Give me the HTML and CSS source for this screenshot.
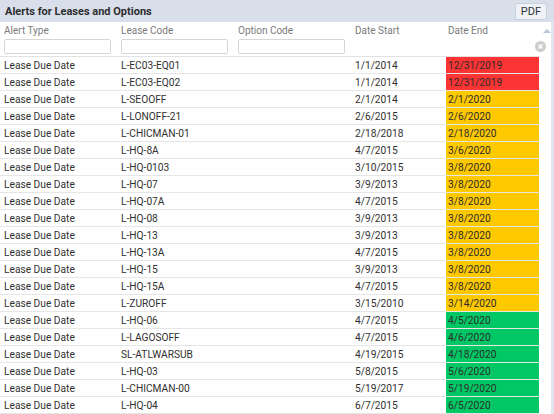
FILE: index.html
```html
<!DOCTYPE html>
<html>
	<head>
		<meta charset="utf-8">
		<title>Alerts for Leases and Options</title>
		<link rel="stylesheet" href="styles.css">
	</head>
	<body>
		<div class="titlebar">
			<span class="title">Alerts for Leases and Options</span>
			<span class="pdf">PDF</span>
		</div>
		<div class="main">
			<table class="grid">
				<colgroup>
					<col style="width:117px"><col style="width:117px"><col style="width:117px"><col style="width:95px"><col style="width:93px">
				</colgroup>
				<thead>
					<tr class="heads">
						<th>Alert Type</th>
						<th>Lease Code</th>
						<th>Option Code</th>
						<th>Date Start</th>
						<th class="endhead">Date End</th>
					</tr>
					<tr class="filters">
						<td><input type="text"></td>
						<td><input type="text"></td>
						<td><input type="text"></td>
						<td></td>
						<td></td>
					</tr>
				</thead>
				<tbody id="rows"></tbody>
			</table>
			<div class="scroll">
				<div class="arrow"></div>
				<div class="clear">
					<svg width="11" height="11" viewBox="0 0 11 11"><circle cx="5.5" cy="5.5" r="5.5" fill="#cdcdcd"/><path d="M3.6 3.6 L7.4 7.4 M7.4 3.6 L3.6 7.4" stroke="#fff" stroke-width="1.4"/></svg>
				</div>
			</div>
			<div class="edge"></div>
		</div>

		<script type="text/javascript">
			var data = [
				["L-EC03-EQ01","1/1/2014","12/31/2019","red"],
				["L-EC03-EQ02","1/1/2014","12/31/2019","red"],
				["L-SEOOFF","2/1/2014","2/1/2020","yellow"],
				["L-LONOFF-21","2/6/2015","2/6/2020","yellow"],
				["L-CHICMAN-01","2/18/2018","2/18/2020","yellow"],
				["L-HQ-8A","4/7/2015","3/6/2020","yellow"],
				["L-HQ-0103","3/10/2015","3/8/2020","yellow"],
				["L-HQ-07","3/9/2013","3/8/2020","yellow"],
				["L-HQ-07A","4/7/2015","3/8/2020","yellow"],
				["L-HQ-08","3/9/2013","3/8/2020","yellow"],
				["L-HQ-13","3/9/2013","3/8/2020","yellow"],
				["L-HQ-13A","4/7/2015","3/8/2020","yellow"],
				["L-HQ-15","3/9/2013","3/8/2020","yellow"],
				["L-HQ-15A","4/7/2015","3/8/2020","yellow"],
				["L-ZUROFF","3/15/2010","3/14/2020","yellow"],
				["L-HQ-06","4/7/2015","4/5/2020","green"],
				["L-LAGOSOFF","4/7/2015","4/6/2020","green"],
				["SL-ATLWARSUB","4/19/2015","4/18/2020","green"],
				["L-HQ-03","5/8/2015","5/6/2020","green"],
				["L-CHICMAN-00","5/19/2017","5/19/2020","green"],
				["L-HQ-04","6/7/2015","6/5/2020","green"]
			];
			var tb = document.getElementById("rows");
			var html = "";
			for(var i=0; i<data.length; i++){
				var r = data[i];
				html += '<tr><td>Lease Due Date</td><td>'+r[0]+'</td><td></td><td>'+r[1]+'</td><td class="end"><div class="due '+r[3]+'">'+r[2]+'</div></td></tr>';
			}
			tb.innerHTML = html;
		</script>
	</body>
</html>
```
FILE: styles.css
```css
html,body{margin: 0; padding: 0;}
body{
	width: 554px;
	height: 414px;
	overflow: hidden;
	background: #fff;
	font-family: Roboto, "Liberation Sans", sans-serif;
	font-size: 10px;
	color: #333;
}
.titlebar{
	height: 22px;
	background: #d8dfea;
	display: flex;
	align-items: center;
	justify-content: space-between;
	padding: 0 7px 0 5px;
}
.title{
	font-size: 11px;
	font-weight: bold;
	color: #2e2e2e;
}
.pdf{
	height: 15px;
	line-height: 15px;
	padding: 0 5px;
	font-size: 11px;
	background: #eef1f6;
	border: 1px solid #c9d1dd;
	border-radius: 2px;
	color: #333;
}
.main{
	display: flex;
}
.grid{
	width: 539px;
	table-layout: fixed;
	border-collapse: collapse;
}
.grid th{
	height: 16px;
	padding: 0 4px;
	text-align: left;
	font-weight: normal;
	color: #7b7b7b;
	white-space: nowrap;
}
.grid th.endhead{
	padding-left: 2px;
}
.filters td{
	height: 15px;
	padding: 1px 6px 2px 4px;
	border-bottom: 1px solid #e2e2e2;
}
.filters input{
	display: block;
	width: 100%;
	height: 15px;
	box-sizing: border-box;
	border: 1px solid #d6d6d6;
	border-radius: 2px;
	background: #fff;
	margin: 0;
	padding: 0;
}
#rows td{
	height: 14px;
	padding: 2px 4px 0;
	line-height: 14px;
	border-bottom: 1px solid #e6e6e6;
	white-space: nowrap;
	color: #303030;
	font-size: 10.2px;
}
#rows td.end{
	padding: 0;
}
.due{
	height: 14px;
	padding: 2px 0 0 2px;
	line-height: 14px;
	color: #2c2c2c;
}
.red{ background: #fd3434; }
.yellow{ background: #ffc900; }
.green{ background: #01c865; }
.scroll{
	width: 12px;
	display: flex;
	flex-direction: column;
	align-items: flex-end;
}
.arrow{
	margin-top: 7px;
	width: 0;
	height: 0;
	border-left: 4px solid transparent;
	border-right: 4px solid transparent;
	border-bottom: 4px solid #b9c6d8;
}
.clear{
	margin-top: 8px;
	margin-right: 5px;
	height: 11px;
}
.edge{
	width: 3px;
	height: 392px;
	background: #e1e7f0;
}
```
